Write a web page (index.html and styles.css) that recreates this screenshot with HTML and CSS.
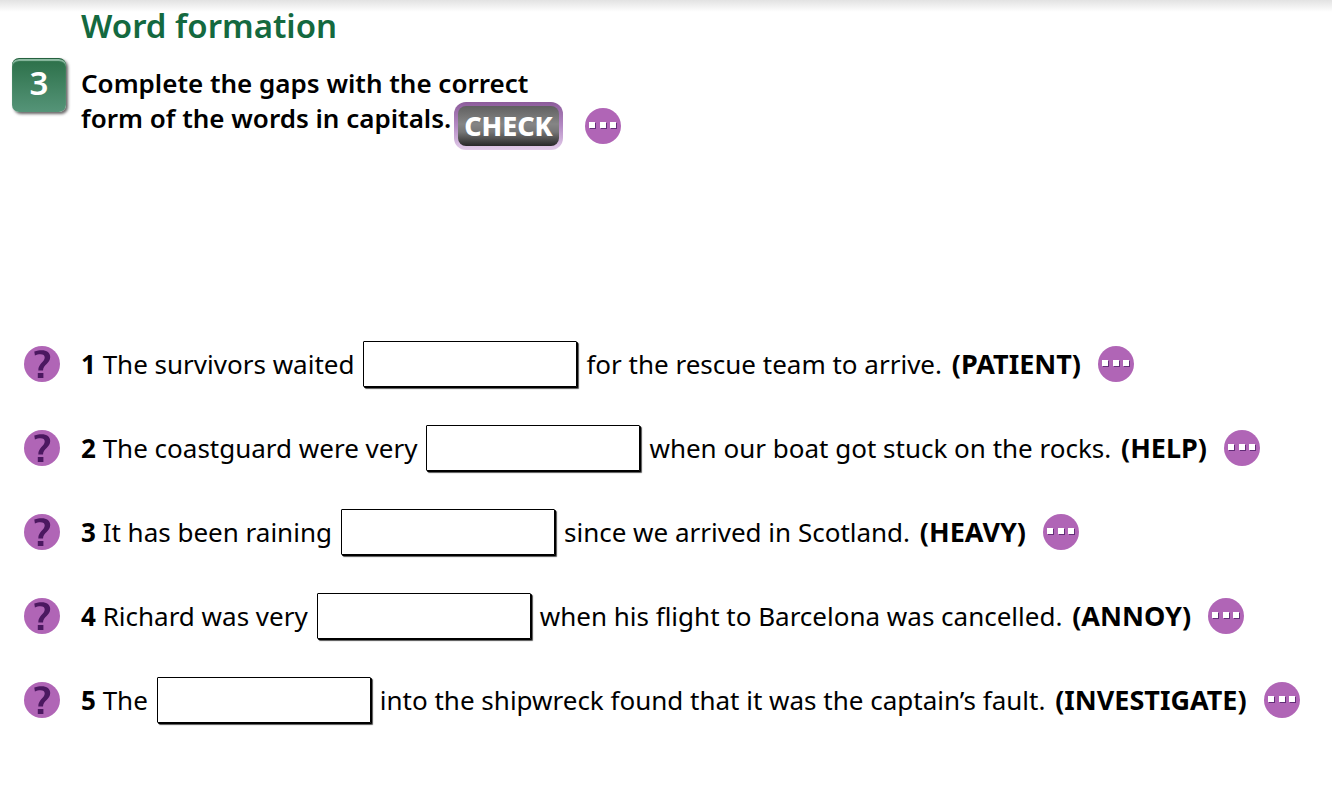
FILE: index.html
```html
<!DOCTYPE html>
<html lang="en">
<head>
    <meta charset="UTF-8">
    <title>Word formation</title>
    <link rel="stylesheet" href="styles.css">
</head>
<body>
    <!-- shared icons -->
    <svg class="sprite" aria-hidden="true">
        <symbol id="icon-more" viewBox="0 0 36 36">
            <circle cx="18" cy="18" r="18" fill="#b065b6"/>
            <path d="M5 15h6v6H5zM16 15h6v6h-6zM26 15h6v6h-6z" fill="#632d78"/>
            <path d="M4 14h6v6H4zM15 14h6v6h-6zM25 14h6v6h-6z" fill="#fff"/>
        </symbol>
        <symbol id="icon-help" viewBox="0 0 36 36">
            <circle cx="18" cy="18" r="18" fill="#b065b6"/>
            <path d="M10.300 5.500C13 4.600 15.500 4.300 17.500 4.300C23 4.300 26.200 6.900 26.200 11C26.200 17.500 19.200 18.500 19 24.500H14.300C14.200 17.500 20.700 16 20.700 11.500C20.700 9.300 19.200 8.200 16.500 8.200C14.500 8.200 12.500 8.700 10.900 9.400z" fill="#4b1860"/>
            <path d="M13.800 27h5.600v5h-5.600z" fill="#4b1860"/>
        </symbol>
    </svg>

    <header class="header">
        <h1>Word formation</h1>
        <div class="task">
            <span class="task-number">3</span>
            <h2>Complete the gaps with the correct<br>form of the words in capitals.</h2>
            <div class="task-actions">
                <button type="submit" form="exercise" class="check-btn">CHECK</button>
                <button type="button" class="icon-btn" aria-label="Show all answers"><svg><use href="#icon-more"/></svg></button>
            </div>
        </div>
    </header>

    <form id="exercise" class="exercise">
        <div class="question">
            <button type="button" class="icon-btn" aria-label="Hint 1"><svg><use href="#icon-help"/></svg></button>
            <label for="gap1"><b>1</b> The survivors waited</label>
            <input type="text" id="gap1" class="gap">
            <span class="rest">for the rescue team to arrive. <b>(PATIENT)</b></span>
            <button type="button" class="icon-btn" aria-label="Show answer 1"><svg><use href="#icon-more"/></svg></button>
        </div>
        <div class="question">
            <button type="button" class="icon-btn" aria-label="Hint 2"><svg><use href="#icon-help"/></svg></button>
            <label for="gap2"><b>2</b> The coastguard were very</label>
            <input type="text" id="gap2" class="gap">
            <span class="rest">when our boat got stuck on the rocks. <b>(HELP)</b></span>
            <button type="button" class="icon-btn" aria-label="Show answer 2"><svg><use href="#icon-more"/></svg></button>
        </div>
        <div class="question">
            <button type="button" class="icon-btn" aria-label="Hint 3"><svg><use href="#icon-help"/></svg></button>
            <label for="gap3"><b>3</b> It has been raining</label>
            <input type="text" id="gap3" class="gap">
            <span class="rest">since we arrived in Scotland. <b>(HEAVY)</b></span>
            <button type="button" class="icon-btn" aria-label="Show answer 3"><svg><use href="#icon-more"/></svg></button>
        </div>
        <div class="question">
            <button type="button" class="icon-btn" aria-label="Hint 4"><svg><use href="#icon-help"/></svg></button>
            <label for="gap4"><b>4</b> Richard was very</label>
            <input type="text" id="gap4" class="gap">
            <span class="rest">when his flight to Barcelona was cancelled. <b>(ANNOY)</b></span>
            <button type="button" class="icon-btn" aria-label="Show answer 4"><svg><use href="#icon-more"/></svg></button>
        </div>
        <div class="question">
            <button type="button" class="icon-btn" aria-label="Hint 5"><svg><use href="#icon-help"/></svg></button>
            <label for="gap5"><b>5</b> The</label>
            <input type="text" id="gap5" class="gap">
            <span class="rest">into the shipwreck found that it was the captain’s fault. <b>(INVESTIGATE)</b></span>
            <button type="button" class="icon-btn" aria-label="Show answer 5"><svg><use href="#icon-more"/></svg></button>
        </div>
    </form>
</body>
</html>
```
FILE: styles.css
```css
body {
    margin: 0;
    padding: 6px 12px 40px;
    font-family: "Noto Sans", "Open Sans", sans-serif;
    font-size: 26px;
    color: #000000;
    background: linear-gradient(#e2e2e2, #ffffff 12px) no-repeat #ffffff;
}

.sprite {
    display: none;
}

h1 {
    margin: 0 0 12px 69px;
    font-size: 33px;
    line-height: 40px;
    font-weight: 600;
    color: #14693f;
}

/* the buttons share the grid with the text and hang off the end of its last line */
.task {
    display: grid;
    grid-template-columns: 54px 374px auto;
    justify-content: start;
}

.task-number {
    width: 54px;
    height: 54px;
    box-sizing: border-box;
    border-radius: 7px;
    border-top: 1px solid #25613f;
    background: linear-gradient(#2c7049, #559478);
    box-shadow: inset 0 2px 1px #8fbda5, 2px 2px 3px #666666;
    color: #ffffff;
    font-size: 33px;
    line-height: 48px;
    font-weight: 600;
    text-align: center;
}

h2 {
    margin: 8px 0 0 15px;
    font-size: 26px;
    line-height: 35px;
    font-weight: 600;
    white-space: nowrap;
}

.task-actions {
    display: flex;
    align-items: center;
    align-self: end;
    gap: 22px;
    margin: 0 0 -14px 14px;
}

.check-btn {
    width: 109px;
    height: 48px;
    padding: 0;
    border: 4px solid transparent;
    border-radius: 12px;
    background:
        linear-gradient(#606060, #858585 45%, #757575 65%, #282828) padding-box,
        linear-gradient(#8d5c9b, #b48ac4 50%, #e3cdea) border-box;
    color: #ffffff;
    font-family: inherit;
    font-size: 27px;
    line-height: 38px;
    font-weight: 800;
    cursor: pointer;
}

.icon-btn {
    flex: none;
    width: 36px;
    height: 36px;
    padding: 0;
    border: none;
    border-radius: 50%;
    background: none;
    cursor: pointer;
}

    .icon-btn svg {
        display: block;
        width: 36px;
        height: 36px;
    }

.exercise {
    display: flex;
    flex-direction: column;
    gap: 38px;
    margin-top: 205px;
    padding-left: 12px;
}

.question {
    display: flex;
    align-items: center;
    line-height: 36px;
    white-space: nowrap;
}

    .question label {
        margin-left: 21px;
    }

.gap {
    width: 214px;
    height: 46px;
    margin: 0 9px;
    padding: 0 8px;
    box-sizing: border-box;
    border: 1px solid #000000;
    border-radius: 1px;
    box-shadow: 1px 1px 0 #000000, 2px 2px 1px #555555;
    font: inherit;
}

.rest {
    margin-right: 17px;
}

    .rest b {
        margin-left: 3px;
        font-size: 27px;
    }
```
